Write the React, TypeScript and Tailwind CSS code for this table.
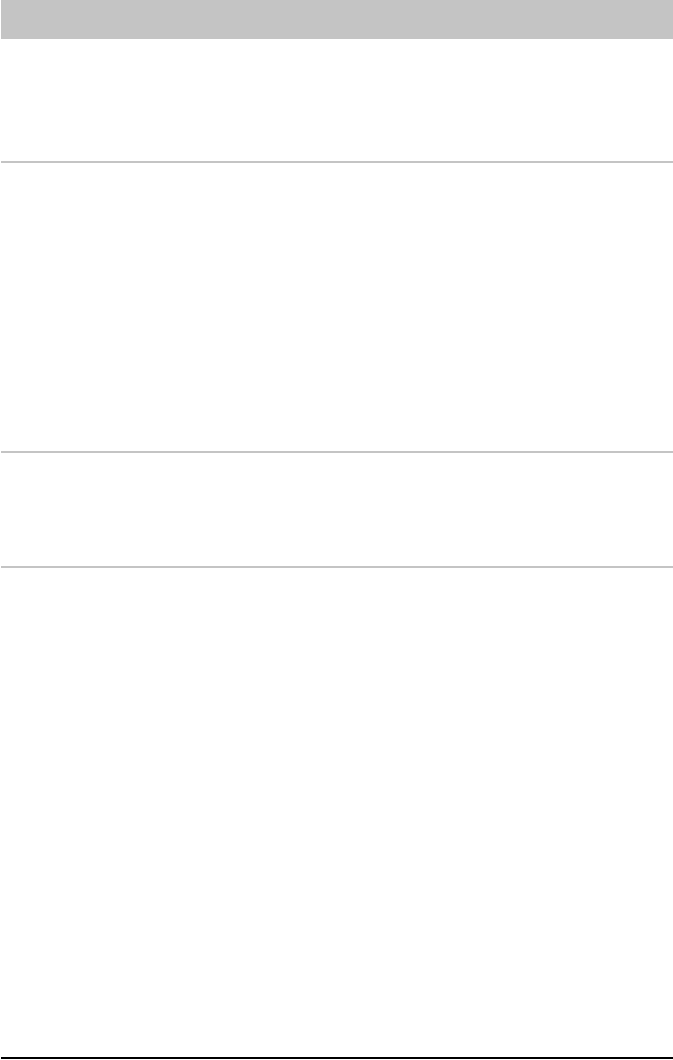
export default function App() {
  return (
    <div className="min-h-[1060px] bg-white font-['Liberation_Sans',sans-serif]">
      <div className="ml-[1px] flex w-[672px] flex-col">
        <header className="h-[39px] bg-[#c4c4c4]" />
        <section className="h-[124px] border-b-2 border-[#c4c4c4]" />
        <section className="h-[290px] border-b-2 border-[#c4c4c4]" />
        <section className="h-[115px] border-b-2 border-[#c4c4c4]" />
        <section className="h-[491px] border-b-2 border-black" />
      </div>
    </div>
  )
}
